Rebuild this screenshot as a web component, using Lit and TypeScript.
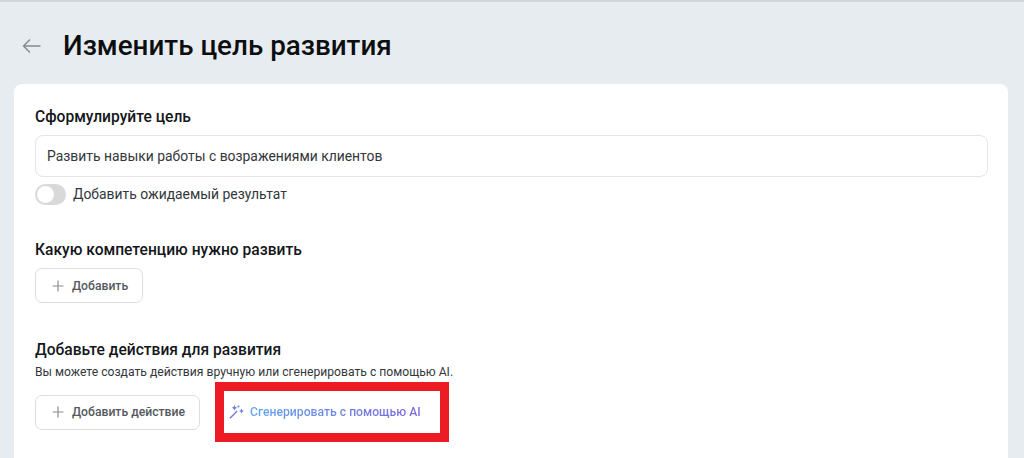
import { LitElement, html, css } from "lit";
import { customElement } from "lit/decorators.js";

const plus = html`<svg class="plus" width="12" height="12" viewBox="0 0 12 12" fill="none" stroke="#8a8f94" stroke-width="1.2"><path d="M6 .5v11M.5 6h11"/></svg>`;

@customElement("app-root")
export class AppRoot extends LitElement {
  static styles = css`
    :host {
      display: block;
      width: 1024px;
      height: 458px;
      overflow: hidden;
      background: #e7ecf0;
      font-family: Roboto, "Liberation Sans", sans-serif;
      color: #1a1c1e;
    }
    .topline { height: 2px; background: #d3d5d8; }
    .header {
      display: flex;
      align-items: center;
      height: 82px;
      padding: 6px 0 0 22px;
      box-sizing: border-box;
    }
    .header svg { display: block; }
    h1 {
      margin: 0 0 0 21px;
      font-size: 27.8px;
      line-height: 36px;
      font-weight: 500;
      color: #0d0e10;
    }
    .card {
      margin: 0 16px 0 14px;
      height: 374px;
      box-sizing: border-box;
      background: #fff;
      border-radius: 8px 8px 0 0;
      padding: 23px 20px 0 21px;
      display: flex;
      flex-direction: column;
    }
    h2 {
      margin: 0;
      font-size: 15.6px;
      line-height: 20px;
      font-weight: 500;
      color: #14161a;
    }
    .input {
      margin-top: 8px;
      height: 42px;
      box-sizing: border-box;
      border: 1.5px solid #e4e5e7;
      border-radius: 8px;
      padding: 0 11px;
      display: flex;
      align-items: center;
      font-size: 13.9px;
      color: #33373b;
    }
    .toggle-row {
      margin-top: 7px;
      display: flex;
      align-items: center;
      gap: 7px;
      font-size: 13.9px;
      line-height: 21px;
      color: #33373b;
    }
    .toggle {
      width: 31px;
      height: 21px;
      border-radius: 11px;
      background: #d9d9d9;
      display: flex;
      align-items: center;
      padding-left: 2px;
      box-sizing: border-box;
    }
    .knob { width: 17px; height: 17px; border-radius: 50%; background: #fff; }
    .sec2 { margin-top: 35px; }
    .btn {
      display: inline-flex;
      align-items: center;
      gap: 8px;
      height: 35px;
      box-sizing: border-box;
      padding: 0 14px 0 16px;
      border: 1.5px solid #dcdddf;
      border-radius: 7px;
      background: #fff;
      font-size: 12.2px;
      font-weight: 500;
      color: #55595e;
      flex: none;
    }
    .btn-wrap { margin-top: 8px; display: flex; }
    .sec3 { margin-top: 37px; }
    .hint {
      margin-top: 5px;
      font-size: 12.15px;
      line-height: 14px;
      color: #33373b;
    }
    .actions {
      margin-top: 3px;
      display: flex;
      align-items: center;
      gap: 15px;
    }
    .highlight {
      width: 234px;
      height: 60px;
      box-sizing: border-box;
      border: 9px solid #ed1c24;
      display: flex;
      align-items: center;
      gap: 6px;
      padding-left: 5px;
      font-size: 12.2px;
      font-weight: 500;
      background: #fff;
    }
    .ai {
      background: linear-gradient(90deg, #62a4ee, #7a68de);
      -webkit-background-clip: text;
      background-clip: text;
      color: transparent;
      white-space: nowrap;
    }
  `;

  render() {
    return html`
      <div class="topline"></div>
      <div class="header">
        <svg width="20" height="16" viewBox="0 0 20 16" fill="none" stroke="#85898d" stroke-width="1.4">
          <path d="M18.5 8H1.5M8 1.5 1.5 8 8 14.5"/>
        </svg>
        <h1>Изменить цель развития</h1>
      </div>
      <div class="card">
        <h2>Сформулируйте цель</h2>
        <div class="input">Развить навыки работы с возражениями клиентов</div>
        <div class="toggle-row">
          <div class="toggle"><div class="knob"></div></div>
          Добавить ожидаемый результат
        </div>
        <h2 class="sec2">Какую компетенцию нужно развить</h2>
        <div class="btn-wrap"><div class="btn">${plus}Добавить</div></div>
        <h2 class="sec3">Добавьте действия для развития</h2>
        <div class="hint">Вы можете создать действия вручную или сгенерировать с помощью AI.</div>
        <div class="actions">
          <div class="btn">${plus}Добавить действие</div>
          <div class="highlight">
            <svg width="15" height="14" viewBox="0 0 15 14" fill="none">
              <path d="M1 13.2 8.2 6" stroke="#6d7fe4" stroke-width="1.5"/>
              <path d="M5.5 0l.9 1.9 1.9.9-1.9.9-.9 1.9-.9-1.9-1.9-.9 1.9-.9zM12.5 3.5l.8 1.7 1.7.8-1.7.8-.8 1.7-.8-1.7-1.7-.8 1.7-.8zM9.5 0l.5 1 1 .5-1 .5-.5 1-.5-1-1-.5 1-.5z" fill="#6d7fe4"/>
            </svg>
            <span class="ai">Сгенерировать с помощью AI</span>
          </div>
        </div>
      </div>
    `;
  }
}
